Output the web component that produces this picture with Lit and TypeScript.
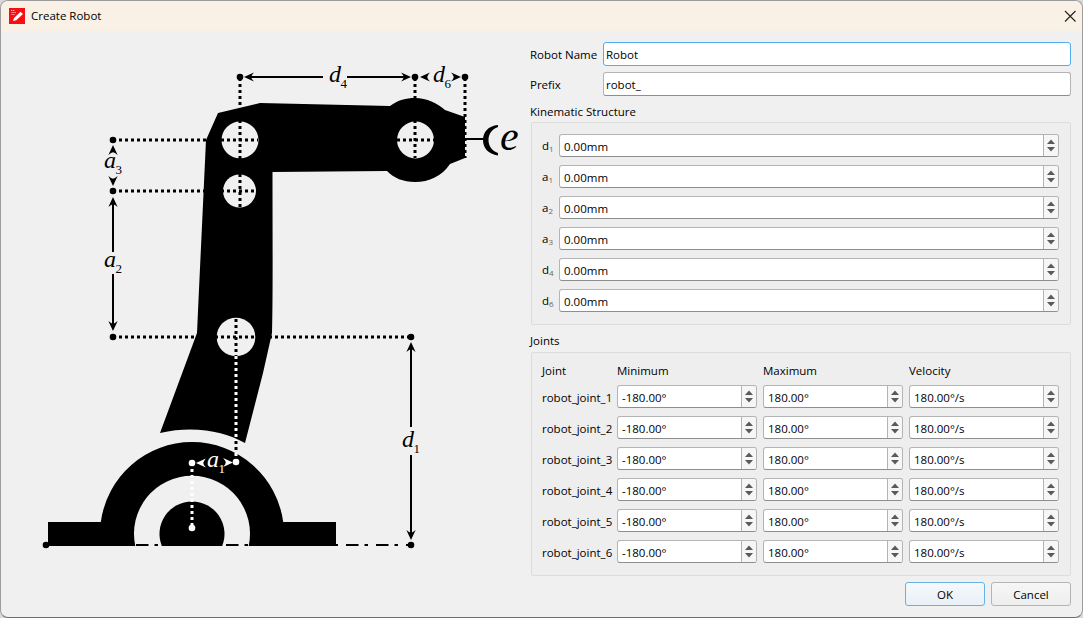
import { LitElement, html, svg, css } from "lit";
import { customElement } from "lit/decorators.js";

const BG = "#f0f0f0";

const arrow = (x: number, y: number, rot: number, c = "#000", s = 1.1) =>
  svg`<path transform="translate(${x} ${y}) rotate(${rot}) scale(${s})" d="M0 0L-9 -4.2Q-6.6 -1.5 -6.6 0Q-6.6 1.5 -9 4.2Z" fill=${c}></path>`;
const dot = (x: number, y: number, c = "#000") => svg`<circle cx=${x} cy=${y} r="3.3" fill=${c}></circle>`;
const dotted = (x1: number, y1: number, x2: number, y2: number, c = "#000") =>
  svg`<line x1=${x1} y1=${y1} x2=${x2} y2=${y2} stroke=${c} stroke-width="3" stroke-dasharray="3 3"></line>`;
const solid = (x1: number, y1: number, x2: number, y2: number) =>
  svg`<line x1=${x1} y1=${y1} x2=${x2} y2=${y2} stroke="#000" stroke-width="2"></line>`;
const label = (x: number, y: number, l: string, sub: string, c = "#000") => svg`
  <text x=${x} y=${y} class="math" fill=${c}>${l}</text>
  <text x=${x + 11.5} y=${y + 6} class="msub" fill=${c}>${sub}</text>`;

const robot = svg`
  <path fill="#000" d="M206 140L218 113L260 103L390 106C398 100 406 98 415 98C427 98 437 103 445 110L465 117V158L450 164C442 176 429 182 415 182C403 182 394 178 387 171L272.5 172C272.5 230 273 300 272 333L263 373L245 443C225 432 195 425 160 433L197 333L198.5 300Z"></path>
  <path fill="#000" d="M48 522H100.8A92 92 0 0 1 283.2 522H336V546H248.7A58 58 0 1 0 135.3 546H48Z"></path>
  <path fill="#000" d="M161.8 546A32.5 32.5 0 1 1 222.2 546Z"></path>
  <circle cx="240" cy="140" r="18.5" fill=${BG}></circle>
  <circle cx="239.5" cy="191" r="16.5" fill=${BG}></circle>
  <circle cx="236" cy="337" r="19.3" fill=${BG}></circle>
  <circle cx="415.5" cy="140" r="18.5" fill=${BG}></circle>
  ${dotted(240, 78, 240, 207)}
  ${dotted(113, 140, 258, 140)}
  ${dotted(113, 191, 256, 191)}
  ${dotted(113, 337, 411, 337)}
  ${dotted(236, 319, 236, 356)}
  ${dotted(415, 78, 415, 158)}
  ${dotted(397, 140, 434, 140)}
  ${dotted(465, 78, 465, 158)}
  ${dotted(236, 356, 236, 441, "#fff")}
  ${dotted(236, 441, 236, 453)}
  ${dotted(236, 453, 236, 462, "#fff")}
  ${dotted(192, 463, 192, 528, "#fff")}
  <line x1="46" y1="545" x2="411" y2="545" stroke="#000" stroke-width="2" stroke-dasharray="12.5 6 3.5 8"></line>
  ${dot(240, 77)}${dot(415, 77)}${dot(465, 77)}
  ${dot(113, 140)}${dot(113, 191)}${dot(113, 337)}${dot(411, 337)}
  ${dot(46, 545)}${dot(411, 545)}
  ${dot(192, 463, "#fff")}${dot(236, 462, "#fff")}${dot(192, 528, "#fff")}
  ${solid(250, 77, 323, 77)}${solid(347, 77, 404, 77)}
  ${arrow(244, 77, 180)}${arrow(411, 77, 0)}
  ${arrow(420, 77, 180)}${arrow(461, 77, 0)}
  ${arrow(113, 145, -90)}${arrow(113, 186, 90)}
  ${solid(113, 202, 113, 252)}${solid(113, 274, 113, 325)}
  ${arrow(113, 197, -90)}${arrow(113, 331, 90)}
  ${solid(411, 348, 411, 427)}${solid(411, 455, 411, 534)}
  ${arrow(411, 342, -90)}${arrow(411, 540, 90)}
  ${arrow(196, 463, 180, "#fff")}${arrow(233, 462.5, 0, "#fff")}
  ${label(329, 82, "d", "4")}
  ${label(433, 82, "d", "6")}
  ${label(104, 168, "a", "3")}
  ${label(104, 267, "a", "2")}
  ${label(402, 447, "d", "1")}
  ${label(207, 467, "a", "1", "#fff")}
  ${solid(465, 139, 484, 139)}
  <path fill="#000" d="M498 125C488 126 483 132 483 140C483 148 488 154 498 155.5V153C492 151 488.5 146 488.5 140C488.5 134 492 129 498 127Z"></path>
  <text x="500" y="150" class="mtool">e</text>
`;

const updown = html`<svg class="arrows" viewBox="0 0 14 21" width="14" height="21" aria-hidden="true">
  <path d="M7 4.5L11 9H3Z" fill="#5a5a5a"></path>
  <path d="M3 12H11L7 16.5Z" fill="#5a5a5a"></path>
</svg>`;

const KIN: [string, string][] = [["d", "1"], ["a", "1"], ["a", "2"], ["a", "3"], ["d", "4"], ["d", "6"]];

@customElement("app-root")
export class AppRoot extends LitElement {
  static styles = css`
    :host {
      display: block;
      width: 1083px;
      height: 618px;
      background: #d9d9d9;
      font-family: "Open Sans", "Noto Sans", sans-serif;
      font-size: 11.5px;
      color: #000;
    }
    .window {
      box-sizing: border-box;
      width: 1083px;
      height: 618px;
      display: flex;
      flex-direction: column;
      background: #f0f0f0;
      border: 1px solid #9c9c9c;
      border-bottom-color: #6e6e6e;
      border-radius: 8px;
      overflow: hidden;
    }
    .title {
      height: 30px;
      flex: none;
      display: flex;
      align-items: center;
      background: #f9f1e6;
      padding: 0 5px 0 8px;
      gap: 6px;
    }
    .title .text { flex: 1; font-size: 11.5px; padding-bottom: 2px; }
    .main { flex: 1; display: flex; min-height: 0; }
    .canvas { flex: none; width: 529px; height: 586px; display: block; }
    .math { font-family: "Liberation Serif", serif; font-style: italic; font-size: 24px; }
    .msub { font-family: "Liberation Serif", serif; font-size: 13px; }
    .mtool { font-family: "Liberation Serif", serif; font-style: italic; font-size: 42px; fill: #000; }
    .side {
      flex: 1;
      display: flex;
      flex-direction: column;
      padding: 11px 11px 0 0;
      min-width: 0;
    }
    .field {
      display: grid;
      grid-template-columns: 73px 1fr;
      align-items: center;
      height: 24px;
      margin-bottom: 6px;
    }
    .input {
      box-sizing: border-box;
      height: 100%;
      display: flex;
      align-items: center;
      background: #fff;
      border: 1px solid #b4b4b4;
      border-bottom-color: #8e8e8e;
      border-radius: 3px;
      padding-left: 2px;
      font-size: 11.5px;
    }
    .input.focus { border-color: #52aef0; }
    .heading { height: 20px; line-height: 20px; margin-top: 0; }
    .heading.joints { margin-top: 6px; height: 21px; }
    .group {
      box-sizing: border-box;
      margin-left: 1px;
      border: 1px solid #dcdcdc;
      border-radius: 2px;
      background: #eeeeee;
      padding: 11px 11px 12px 10px;
    }
    .kin {
      display: grid;
      grid-template-columns: 11px 1fr;
      grid-auto-rows: 23px;
      column-gap: 6px;
      row-gap: 8px;
      align-items: center;
    }
    .kin .lab { font-size: 11.5px; white-space: nowrap; }
    .kin sub { font-size: 8px; color: #666; vertical-align: -2px; line-height: 0; }
    .joints-grid {
      display: grid;
      grid-template-columns: 69px 140px 140px 150px;
      grid-template-rows: 13px repeat(6, 23px);
      column-gap: 6px;
      row-gap: 8px;
      align-items: center;
    }
    .jname { padding-top: 2px; }
    .spin {
      box-sizing: border-box;
      height: 23px;
      display: flex;
      background: #fff;
      border: 1px solid #b4b4b4;
      border-bottom-color: #8e8e8e;
      border-radius: 3px;
      min-width: 0;
    }
    .spin .val {
      flex: 1;
      padding: 1px 0 0 4px;
      line-height: 21px;
      font-size: 11.5px;
      min-width: 0;
    }
    .spin .btn {
      flex: none;
      width: 14px;
      background: #f6f6f6;
      border-left: 1px solid #b4b4b4;
      border-radius: 0 2px 2px 0;
      display: flex;
    }
    .arrows { display: block; }
    .buttons {
      display: flex;
      justify-content: flex-end;
      gap: 6px;
      margin-top: 6px;
    }
    .b {
      box-sizing: border-box;
      width: 80px;
      height: 24px;
      display: flex;
      align-items: center;
      justify-content: center;
      border: 1px solid #b4b4b4;
      border-radius: 3px;
      background: linear-gradient(#f6f6f6, #eeeeee);
    }
    .b.def {
      border-color: #64b2e8;
      background: linear-gradient(#f5f9fc, #e9f0f6);
    }
  `;

  private spin(v: string) {
    return html`<div class="spin"><div class="val">${v}</div><div class="btn">${updown}</div></div>`;
  }

  render() {
    return html`<div class="window">
      <div class="title">
        <svg width="16" height="16" viewBox="0 0 16 16" aria-hidden="true">
          <rect width="16" height="16" fill="#f70d12"></rect>
          <path d="M2 2.5H6M2.5 4.5H7M2.5 6.5H6" stroke="#fff" stroke-width="0.7" stroke-dasharray="1.2 .6"></path>
          <path d="M4 13L5 10L11.5 3.8L14 6L7.3 12.2Z" fill="#fff"></path>
        </svg>
        <div class="text">Create Robot</div>
        <svg width="14" height="14" viewBox="0 0 14 14" aria-hidden="true">
          <path d="M2 2L12.5 12.5M12.5 2L2 12.5" stroke="#222" stroke-width="1.1" fill="none"></path>
        </svg>
      </div>
      <div class="main">
        <svg class="canvas" viewBox="1 31 529 586">${robot}</svg>
        <div class="side">
          <div class="field"><span>Robot Name</span><div class="input focus">Robot</div></div>
          <div class="field"><span>Prefix</span><div class="input">robot_</div></div>
          <div class="heading">Kinematic Structure</div>
          <div class="group kin">
            ${KIN.map(
              ([l, s]) => html`<div class="lab">${l}<sub>${s}</sub></div>${this.spin("0.00mm")}`
            )}
          </div>
          <div class="heading joints">Joints</div>
          <div class="group joints-grid">
            <div>Joint</div><div>Minimum</div><div>Maximum</div><div>Velocity</div>
            ${[1, 2, 3, 4, 5, 6].map(
              (n) => html`<div class="jname">robot_joint_${n}</div>
                ${this.spin("-180.00°")}${this.spin("180.00°")}${this.spin("180.00°/s")}`
            )}
          </div>
          <div class="buttons">
            <div class="b def">OK</div>
            <div class="b">Cancel</div>
          </div>
        </div>
      </div>
    </div>`;
  }
}
